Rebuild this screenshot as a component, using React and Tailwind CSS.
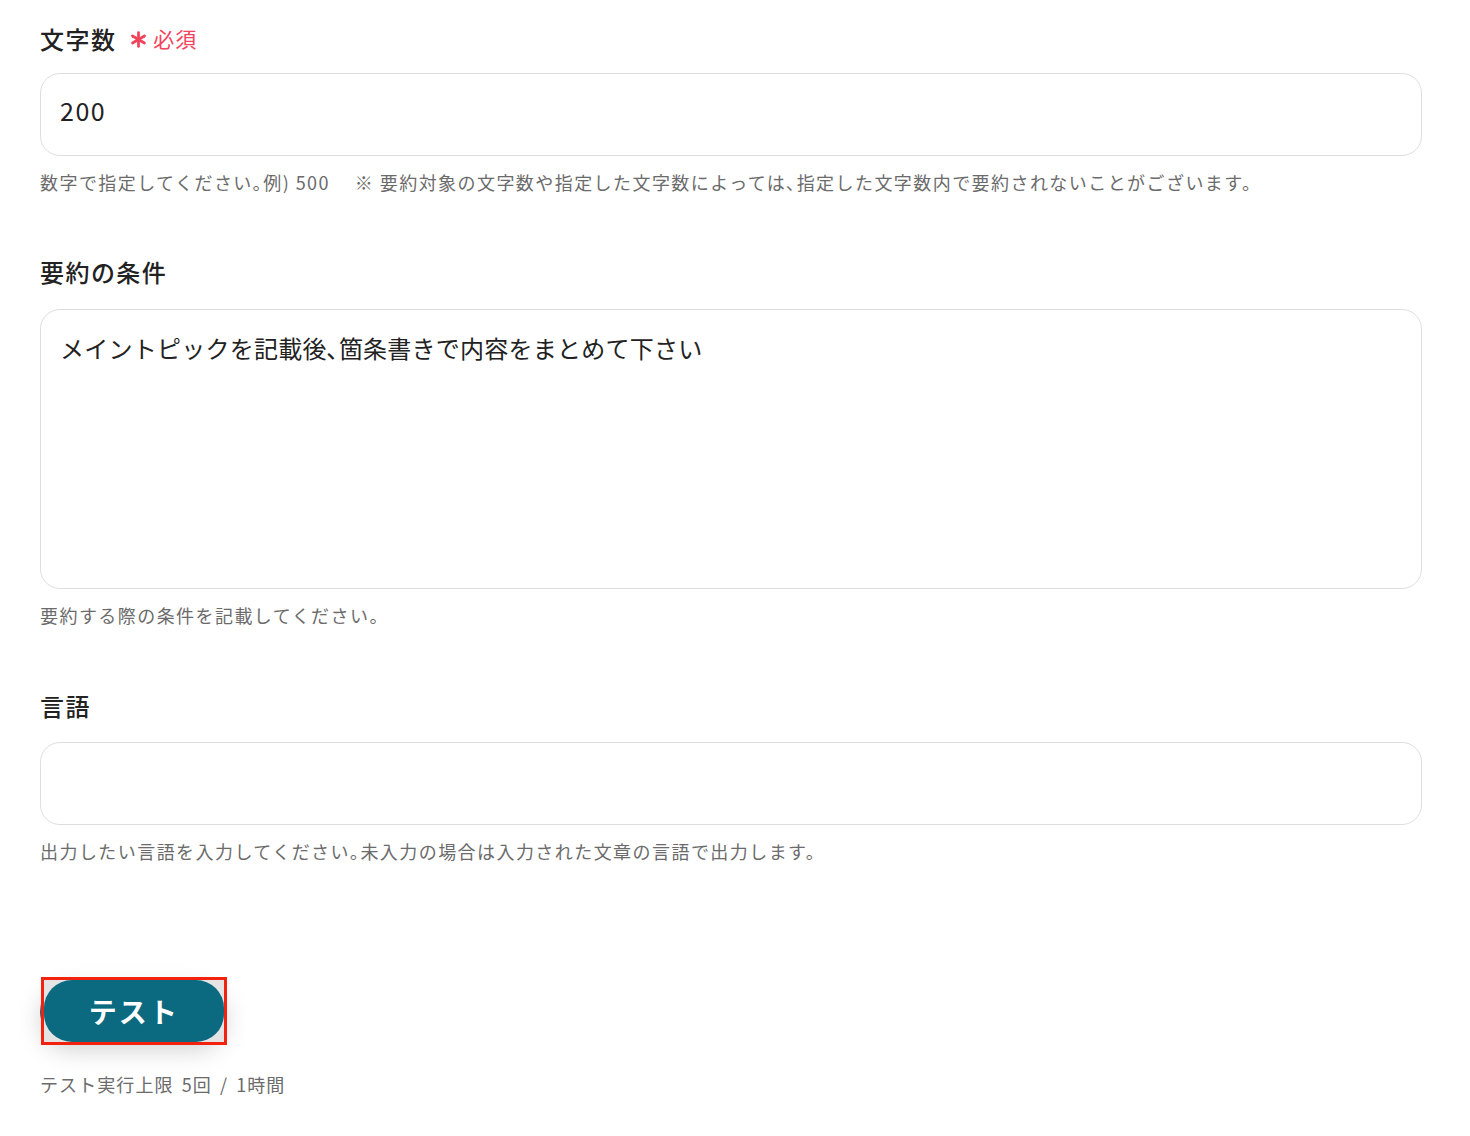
import React from 'react';

const FONT = { fontFamily: '"Noto Sans CJK JP", "Noto Sans", sans-serif' };

const Asterisk = () => (
  <svg width="17" height="17" viewBox="0 0 16 16" className="mr-[6px]">
    <g stroke="#f2445c" strokeWidth="2.6" strokeLinecap="round">
      <line x1="8" y1="1.5" x2="8" y2="14.5" />
      <line x1="2.4" y1="4.75" x2="13.6" y2="11.25" />
      <line x1="2.4" y1="11.25" x2="13.6" y2="4.75" />
    </g>
  </svg>
);

const Label = ({ children, required }) => (
  <div className="flex items-center gap-[14px] h-[40px]">
    <span className="text-[24px] font-medium tracking-[0.06em] text-[#222]">{children}</span>
    {required && (
      <span className="flex items-center text-[21px] tracking-[0.04em] text-[#f2445c]">
        <Asterisk />必須
      </span>
    )}
  </div>
);

const Help = ({ children }) => (
  <p className="mt-[13px] text-[18px] leading-[26px] tracking-[0.08em] text-[#6b6b6b]">{children}</p>
);

const App = () => {
  return (
    <div className="bg-white min-h-[1136px] pl-10 pt-[19px]" style={FONT}>
      <div className="w-[1382px]">
        {/* 文字数 */}
        <Label required>文字数</Label>
        <div className="mt-[14px] h-[83px] rounded-[20px] border border-[#dedede] px-[19px] pt-[20px]">
          <span className="block text-[25px] leading-[32px] text-[#222] tracking-[0.06em]">200</span>
        </div>
        <Help>数字で指定してください｡例) 500　 ※ 要約対象の文字数や指定した文字数によっては､指定した文字数内で要約されないことがございます。</Help>

        {/* 要約の条件 */}
        <div className="mt-[57px]">
          <Label>要約の条件</Label>
        </div>
        <div className="mt-[17px] h-[280px] rounded-[20px] border border-[#dedede] px-[19px] pt-[22px]">
          <span className="text-[24px] leading-[32px] text-[#222] tracking-[0.01em]">メイントピックを記載後､箇条書きで内容をまとめて下さい</span>
        </div>
        <Help>要約する際の条件を記載してください。</Help>

        {/* 言語 */}
        <div className="mt-[58px]">
          <Label>言語</Label>
        </div>
        <div className="mt-[16px] h-[83px] rounded-[20px] border border-[#dedede]" />
        <Help>出力したい言語を入力してください｡未入力の場合は入力された文章の言語で出力します。</Help>

        {/* テスト */}
        <div className="mt-[113px] relative w-[187px] h-[68px]">
          <div className="absolute left-0 top-[4px] w-[186px] h-[61px] rounded-full bg-[#0b6a80] shadow-[0_8px_24px_rgba(0,0,0,0.18)]" />
          <button className="absolute left-[1px] top-0 w-[186px] h-[68px] border-[3px] border-[#f2220f] bg-[#e4e4e4] p-0">
            <span className="flex items-center justify-center w-full h-full rounded-[28px] bg-[#0b6a80] text-white text-[28px] font-bold tracking-[0.08em]">
              テスト
            </span>
          </button>
        </div>
        <p className="mt-[26px] text-[18px] tracking-[0.06em] [word-spacing:3px] text-[#6b6b6b]">テスト実行上限 5回 / 1時間</p>
      </div>
    </div>
  );
};

export default App;
